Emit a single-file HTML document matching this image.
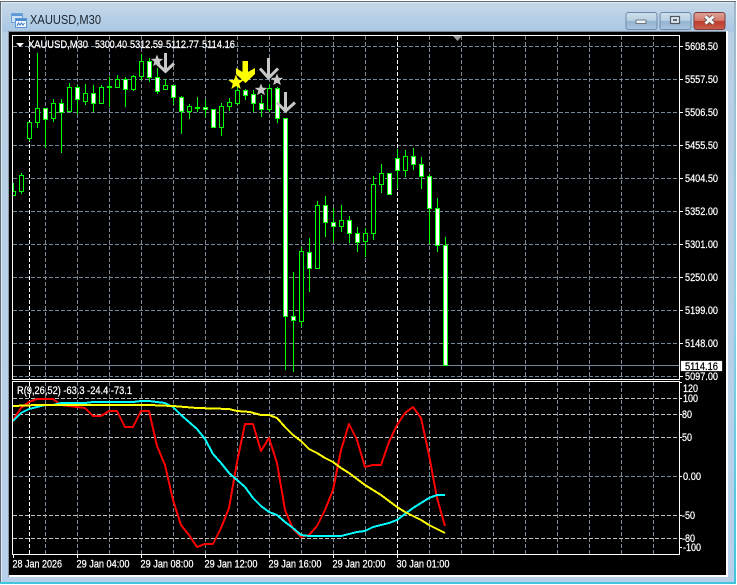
<!DOCTYPE html>
<html><head><meta charset="utf-8"><style>
html,body{margin:0;padding:0;background:#fff}
body{width:737px;height:585px;overflow:hidden;position:relative}
svg{position:absolute;left:0;top:0}
text{font-family:"Liberation Sans",sans-serif}
</style></head><body>
<svg width="737" height="585" viewBox="0 0 737 585">
<defs>
<linearGradient id="t" x1="0" y1="0" x2="0" y2="1"><stop offset="0" stop-color="#c6d8e8"/><stop offset="1" stop-color="#a9c7e4"/></linearGradient>
<linearGradient id="l" x1="0" y1="0" x2="0" y2="1"><stop offset="0" stop-color="#b9cfe3"/><stop offset="1" stop-color="#b8d0ea"/></linearGradient>
<linearGradient id="b" x1="0" y1="0" x2="0" y2="1"><stop offset="0" stop-color="#cfe0ee"/><stop offset=".48" stop-color="#b8cfe2"/><stop offset=".52" stop-color="#93b3d0"/><stop offset="1" stop-color="#a9c6e0"/></linearGradient>
<linearGradient id="r" x1="0" y1="0" x2="0" y2="1"><stop offset="0" stop-color="#e2a399"/><stop offset=".48" stop-color="#d37a6c"/><stop offset=".52" stop-color="#bd3c2c"/><stop offset="1" stop-color="#c9604e"/></linearGradient>
<linearGradient id="e" x1="0" y1="0" x2="0" y2="1"><stop offset="0" stop-color="#9fb6c8"/><stop offset=".5" stop-color="#8fd0e6"/><stop offset="1" stop-color="#3fc6dc"/></linearGradient>
<clipPath id="c1"><rect x="13" y="36" width="666" height="343"/></clipPath>
<clipPath id="c2"><rect x="13" y="382" width="666" height="172"/></clipPath>
</defs>
<!-- window frame -->
<rect x="0" y="0" width="737" height="585" fill="#fff"/>
<rect x="0.5" y="1.5" width="735" height="582" fill="url(#l)" stroke="#5f6b75"/>
<rect x="1.5" y="2.5" width="733" height="580" fill="none" stroke="#dfe9f2"/>
<rect x="2" y="3" width="732" height="29" fill="url(#t)"/>
<rect x="0" y="582" width="736" height="2" fill="#3fc6dc"/>
<rect x="734" y="2" width="2" height="582" fill="url(#e)"/>
<rect x="8" y="31" width="720" height="546" fill="#fff"/>
<rect x="8" y="31" width="1" height="546" fill="#8c98a4"/>
<rect x="8" y="31" width="718" height="1" fill="#7d8995"/>
<rect x="9" y="32" width="717" height="543" fill="#000"/>

<!-- title icon -->
<g shape-rendering="crispEdges">
<rect x="11.5" y="13.5" width="11" height="9" fill="#cfe2f5" stroke="#6fa3d8"/>
<rect x="12" y="14" width="10" height="2" fill="#5d97d6"/>
<rect x="15.5" y="18.5" width="11" height="9" fill="#f2f8fd" stroke="#5c97d4"/>
<rect x="16" y="19" width="10" height="2" fill="#4c8ad0"/>
</g>
<path d="M17 26l1.5-3 1.5 2 1.5-2 1.5 2 1.5-2" fill="none" stroke="#3d7cc6" stroke-width="1"/>
<text x="30" y="24" font-size="12.5" fill="#1c2530" textLength="71" lengthAdjust="spacingAndGlyphs">XAUUSD,M30</text>

<!-- window buttons -->
<rect x="626" y="12.5" width="31" height="17" rx="2.5" fill="url(#b)" stroke="#6e8aa6"/>
<rect x="660" y="12.5" width="31" height="17" rx="2.5" fill="url(#b)" stroke="#6e8aa6"/>
<rect x="694" y="12.5" width="31" height="17" rx="2.5" fill="url(#r)" stroke="#7c3a3c"/>
<rect x="636" y="20" width="10" height="3.5" fill="#eef2f5" stroke="#59646f" stroke-width=".8"/>
<rect x="670.5" y="16.5" width="9" height="7" fill="#dfe6ec" stroke="#4d5966" stroke-width="1.2"/>
<rect x="673" y="19" width="4" height="2" fill="#5d6a78"/>
<path d="M705.5 16.5l8 7M713.5 16.5l-8 7" stroke="#4a3a3a" stroke-width="4.4"/>
<path d="M705.5 16.5l8 7M713.5 16.5l-8 7" stroke="#f2f2f2" stroke-width="3"/>

<!-- grid main -->
<g clip-path="url(#c1)" fill="none" stroke="#778899" stroke-dasharray="4 2" shape-rendering="crispEdges">
<path d="M13 46.5H679M13 79.5H679M13 112.5H679M13 145.5H679M13 178.5H679M13 211.5H679M13 244.5H679M13 277.5H679M13 310.5H679M13 343.5H679M13 376.5H679"/>
<path d="M45.5 36V379M77.5 36V379M109.5 36V379M141.5 36V379M173.5 36V379M205.5 36V379M237.5 36V379M269.5 36V379M301.5 36V379M333.5 36V379M365.5 36V379M429.5 36V379M461.5 36V379M493.5 36V379M525.5 36V379M557.5 36V379M589.5 36V379M621.5 36V379M653.5 36V379"/>
<path d="M29.5 36V379M397.5 36V379" stroke="#fff"/>
</g>
<path d="M13 365.5H679" stroke="#778899" shape-rendering="crispEdges"/>

<!-- candles -->
<g clip-path="url(#c1)">
<path fill="none" stroke="#00ff00" d="M13.5 183V196M21.5 173V194M29.5 122V141M37.5 53V128M45.5 108V148M53.5 99V122M61.5 99V153M69.5 83V112M77.5 85V114M85.5 84V105M93.5 85V112M101.5 85V104M109.5 77V107M117.5 75V88M125.5 77V107M133.5 75V91M141.5 54V80M149.5 58V82M157.5 68V94M165.5 79V90M173.5 85V105M181.5 96V134M189.5 104V119M197.5 97V112M205.5 100V117M213.5 109V128M221.5 103V136M229.5 98V111M237.5 85V105M245.5 89V100M253.5 90V112M261.5 95V117M269.5 84V112M277.5 87V123M285.5 118V370M293.5 272V372M301.5 247V327M309.5 238V292M317.5 201V268M325.5 196V237M333.5 208V242M341.5 205V232M349.5 216V243M357.5 227V252M365.5 228V257M373.5 176V240M381.5 164V193M389.5 173V194M397.5 149V189M405.5 150V177M413.5 148V170M421.5 157V189M429.5 174V244M437.5 198V252M445.5 237V365"/>
<g fill="#000" stroke="#00ff00">
<rect x="11.5" y="191.5" width="4" height="4"/>
<rect x="19.5" y="175.5" width="4" height="16"/>
<rect x="27.5" y="122.5" width="4" height="16"/>
<rect x="35.5" y="108.5" width="4" height="14"/>
<rect x="51.5" y="103.5" width="4" height="15"/>
<rect x="67.5" y="87.5" width="4" height="24"/>
<rect x="83.5" y="93.5" width="4" height="8"/>
<rect x="99.5" y="87.5" width="4" height="16"/>
<rect x="115.5" y="79.5" width="4" height="8"/>
<rect x="131.5" y="76.5" width="4" height="13"/>
<rect x="139.5" y="61.5" width="4" height="15"/>
<rect x="163.5" y="85.5" width="4" height="4"/>
<rect x="187.5" y="106.5" width="4" height="5"/>
<rect x="219.5" y="106.5" width="4" height="21"/>
<rect x="227.5" y="102.5" width="4" height="4"/>
<rect x="235.5" y="90.5" width="4" height="13"/>
<rect x="267.5" y="88.5" width="4" height="21"/>
<rect x="299.5" y="251.5" width="4" height="70"/>
<rect x="315.5" y="205.5" width="4" height="63"/>
<rect x="339.5" y="220.5" width="4" height="6"/>
<rect x="363.5" y="233.5" width="4" height="8"/>
<rect x="371.5" y="184.5" width="4" height="49"/>
<rect x="379.5" y="173.5" width="4" height="11"/>
<rect x="403.5" y="156.5" width="4" height="14"/>
</g>
<g fill="#fff" stroke="#00ff00">
<rect x="43.5" y="108.5" width="4" height="11"/>
<rect x="59.5" y="103.5" width="4" height="9"/>
<rect x="75.5" y="87.5" width="4" height="12"/>
<rect x="91.5" y="93.5" width="4" height="10"/>
<rect x="107.5" y="86.5" width="4" height="1"/>
<rect x="123.5" y="79.5" width="4" height="10"/>
<rect x="147.5" y="61.5" width="4" height="16"/>
<rect x="155.5" y="77.5" width="4" height="14"/>
<rect x="171.5" y="85.5" width="4" height="12"/>
<rect x="179.5" y="97.5" width="4" height="14"/>
<rect x="195.5" y="107.5" width="4" height="1"/>
<rect x="203.5" y="107.5" width="4" height="2"/>
<rect x="211.5" y="109.5" width="4" height="18"/>
<rect x="243.5" y="90.5" width="4" height="5"/>
<rect x="251.5" y="94.5" width="4" height="9"/>
<rect x="259.5" y="103.5" width="4" height="6"/>
<rect x="275.5" y="88.5" width="4" height="30"/>
<rect x="283.5" y="118.5" width="4" height="198"/>
<rect x="291.5" y="316.5" width="4" height="4"/>
<rect x="307.5" y="252.5" width="4" height="16"/>
<rect x="323.5" y="205.5" width="4" height="17"/>
<rect x="331.5" y="222.5" width="4" height="4"/>
<rect x="347.5" y="220.5" width="4" height="13"/>
<rect x="355.5" y="233.5" width="4" height="9"/>
<rect x="387.5" y="173.5" width="4" height="21"/>
<rect x="395.5" y="158.5" width="4" height="12"/>
<rect x="411.5" y="156.5" width="4" height="8"/>
<rect x="419.5" y="164.5" width="4" height="12"/>
<rect x="427.5" y="176.5" width="4" height="32"/>
<rect x="435.5" y="208.5" width="4" height="37"/>
<rect x="443.5" y="245.5" width="4" height="120"/>
</g>
</g>

<!-- arrows -->
<g fill="none" stroke="#c8c8c8">
<path d="M165.5 53V71" stroke-width="3"/><path d="M157 63.5L165.5 71.5L174 63.5" stroke-width="3"/>
<path d="M268.5 58V78" stroke-width="3"/><path d="M260 68.5L268.5 78L278 68.5" stroke-width="3"/>
<path d="M285.5 92V111" stroke-width="3"/><path d="M277 102.5L285.5 111L295 102.5" stroke-width="3"/>
</g>
<path d="M242.5 61H248V72L255 68V74L245.5 83L236 74V68L242.5 72Z" fill="#ffff00"/>
<!-- stars -->
<g fill="#c8c8c8">
<path d="M157 54.5l1.7 4.2 4.5.2-3.5 2.8 1.2 4.4-3.9-2.4-3.9 2.4 1.2-4.4-3.5-2.8 4.5-.2z"/>
<path d="M261 83.5l1.7 4.2 4.5.2-3.5 2.8 1.2 4.4-3.9-2.4-3.9 2.4 1.2-4.4-3.5-2.8 4.5-.2z"/>
<path d="M277 73.5l1.7 4.2 4.5.2-3.5 2.8 1.2 4.4-3.9-2.4-3.9 2.4 1.2-4.4-3.5-2.8 4.5-.2z"/>
</g>
<path d="M236 74.5l2 5.3 5.6.3-4.4 3.5 1.5 5.4-4.7-3-4.7 3 1.5-5.4-4.4-3.5 5.6-.3z" fill="#ffff00"/>

<!-- indicator grid -->
<g clip-path="url(#c2)" fill="none" shape-rendering="crispEdges" stroke-dasharray="4 2">
<path stroke="#778899" d="M45.5 382V554M77.5 382V554M109.5 382V554M141.5 382V554M173.5 382V554M205.5 382V554M237.5 382V554M269.5 382V554M301.5 382V554M333.5 382V554M365.5 382V554M429.5 382V554M461.5 382V554M493.5 382V554M525.5 382V554M557.5 382V554M589.5 382V554M621.5 382V554M653.5 382V554"/>
<path stroke="#fff" d="M29.5 382V554M397.5 382V554"/>
<path stroke="#c0c0c0" d="M13 398.5H679M13 414.5H679M13 437.5H679M13 515.5H679M13 538.5H679"/>
<path stroke="#778899" d="M13 476.5H679"/>
</g>

<!-- indicator lines -->
<g clip-path="url(#c2)" fill="none" stroke-width="2" stroke-linejoin="round" shape-rendering="crispEdges">
<polyline stroke="#ff0000" points="13,420 21,408 29,402 37,399 45,399 53,399 61,405 69,406 77,407 85,408 93,416 101,416 109,411 117,411 125,427 133,427 141,411 149,411 157,446 165,465 173,500 181,525 189,535 197,547 205,544 213,544 221,528 229,508 237,462 245,424 253,424 261,451 269,438 277,463 285,510 293,529 301,537 309,535 317,526 325,510 333,490 341,450 349,424 357,440 365,467 373,465 381,465 389,442 397,425 405,413 413,407 421,418 429,455 437,498 445,526"/>
<polyline stroke="#00ffff" points="13,421 21,413 29,409 37,407 45,405 53,405 61,403 69,403 77,403 85,403 93,402 101,402 109,402 117,402 125,402 133,402 141,401 149,401 157,402 165,403 173,407 181,415 189,422 197,429 205,439 213,454 221,463 229,473 237,480 245,487 253,498 261,506 269,512 277,515 285,522 293,528 301,535 309,536 317,536 325,536 333,536 341,536 349,534 357,532 365,531 373,527 381,525 389,523 397,520 405,514 413,508 421,503 429,498 437,495 445,495"/>
<polyline stroke="#ffff00" points="13,406 37,405 61,405 85,405 109,405 149,405 173,406 197,408 229,409 237,411 250,412 261,415 269,415 277,418 285,427 293,435 301,441 309,449 317,453 325,458 333,462 341,468 349,473 357,479 365,485 373,490 381,495 389,501 397,507 405,512 413,516 421,520 429,525 437,529 445,533"/>
</g>

<!-- borders -->
<g fill="none" stroke="#fff" shape-rendering="crispEdges">
<rect x="12.5" y="35.5" width="667" height="344"/>
<rect x="12.5" y="381.5" width="667" height="173"/>
<path d="M680 46.5h3M680 79.5h3M680 112.5h3M680 145.5h3M680 178.5h3M680 211.5h3M680 244.5h3M680 277.5h3M680 310.5h3M680 343.5h3M680 376.5h3"/>
<path d="M680 382.5h2M680 398.5h2M680 414.5h2M680 437.5h2M680 476.5h2M680 515.5h2M680 538.5h2M680 547.5h2"/>
<path d="M13.5 555v3M77.5 555v3M141.5 555v3M205.5 555v3M269.5 555v3M333.5 555v3M397.5 555v3"/>
</g>
<path d="M453 36h9l-4.5 5z" fill="#9a9a9a"/>
<path d="M16 43h8l-4 4z" fill="#fff"/>

<!-- legend -->
<g fill="#fff" stroke="#fff" stroke-width=".25" font-size="11">
<text x="28" y="48" textLength="60" lengthAdjust="spacingAndGlyphs">XAUUSD,M30</text>
<text x="95" y="48" textLength="32" lengthAdjust="spacingAndGlyphs">5300.40</text>
<text x="130" y="48" textLength="33" lengthAdjust="spacingAndGlyphs">5312.59</text>
<text x="166" y="48" textLength="33" lengthAdjust="spacingAndGlyphs">5112.77</text>
<text x="202" y="48" textLength="33" lengthAdjust="spacingAndGlyphs">5114.16</text>
<text x="17" y="394" textLength="115" lengthAdjust="spacingAndGlyphs">R(9,26,52) -63.3 -24.4 -73.1</text>
</g>

<!-- price labels -->
<g fill="#fff" stroke="#fff" stroke-width=".25" font-size="11">
<text x="685" y="50" textLength="33" lengthAdjust="spacingAndGlyphs">5608.50</text>
<text x="685" y="83" textLength="33" lengthAdjust="spacingAndGlyphs">5557.50</text>
<text x="685" y="116" textLength="33" lengthAdjust="spacingAndGlyphs">5506.50</text>
<text x="685" y="149" textLength="33" lengthAdjust="spacingAndGlyphs">5455.50</text>
<text x="685" y="182" textLength="33" lengthAdjust="spacingAndGlyphs">5404.50</text>
<text x="685" y="215" textLength="33" lengthAdjust="spacingAndGlyphs">5352.00</text>
<text x="685" y="248" textLength="33" lengthAdjust="spacingAndGlyphs">5301.00</text>
<text x="685" y="281" textLength="33" lengthAdjust="spacingAndGlyphs">5250.00</text>
<text x="685" y="314" textLength="33" lengthAdjust="spacingAndGlyphs">5199.00</text>
<text x="685" y="347" textLength="33" lengthAdjust="spacingAndGlyphs">5148.00</text>
<rect x="681" y="361" width="41" height="10" fill="#fff"/>
<text x="685" y="370" fill="#000" stroke="#000" textLength="33" lengthAdjust="spacingAndGlyphs">5114.16</text>
<text x="685" y="380" textLength="33" lengthAdjust="spacingAndGlyphs">5097.00</text>
<text x="683" y="392" textLength="15" lengthAdjust="spacingAndGlyphs">120</text>
<text x="683" y="402" textLength="15" lengthAdjust="spacingAndGlyphs">100</text>
<text x="682" y="418" textLength="10" lengthAdjust="spacingAndGlyphs">80</text>
<text x="682" y="441" textLength="10" lengthAdjust="spacingAndGlyphs">50</text>
<text x="683" y="480" textLength="18" lengthAdjust="spacingAndGlyphs">0.00</text>
<text x="682" y="519" textLength="13" lengthAdjust="spacingAndGlyphs">-50</text>
<text x="682" y="542" textLength="13" lengthAdjust="spacingAndGlyphs">-80</text>
<text x="683" y="551" textLength="18" lengthAdjust="spacingAndGlyphs">-100</text>
</g>

<!-- time labels -->
<g fill="#fff" stroke="#fff" stroke-width=".25" font-size="11">
<text x="12.5" y="567.5" textLength="49.5" lengthAdjust="spacingAndGlyphs">28 Jan 2026</text>
<text x="76.5" y="567.5" textLength="53" lengthAdjust="spacingAndGlyphs">29 Jan 04:00</text>
<text x="140.5" y="567.5" textLength="53" lengthAdjust="spacingAndGlyphs">29 Jan 08:00</text>
<text x="204.5" y="567.5" textLength="53" lengthAdjust="spacingAndGlyphs">29 Jan 12:00</text>
<text x="268.5" y="567.5" textLength="53" lengthAdjust="spacingAndGlyphs">29 Jan 16:00</text>
<text x="332.5" y="567.5" textLength="53" lengthAdjust="spacingAndGlyphs">29 Jan 20:00</text>
<text x="396.5" y="567.5" textLength="53" lengthAdjust="spacingAndGlyphs">30 Jan 01:00</text>
</g>
</svg>
</body></html>
